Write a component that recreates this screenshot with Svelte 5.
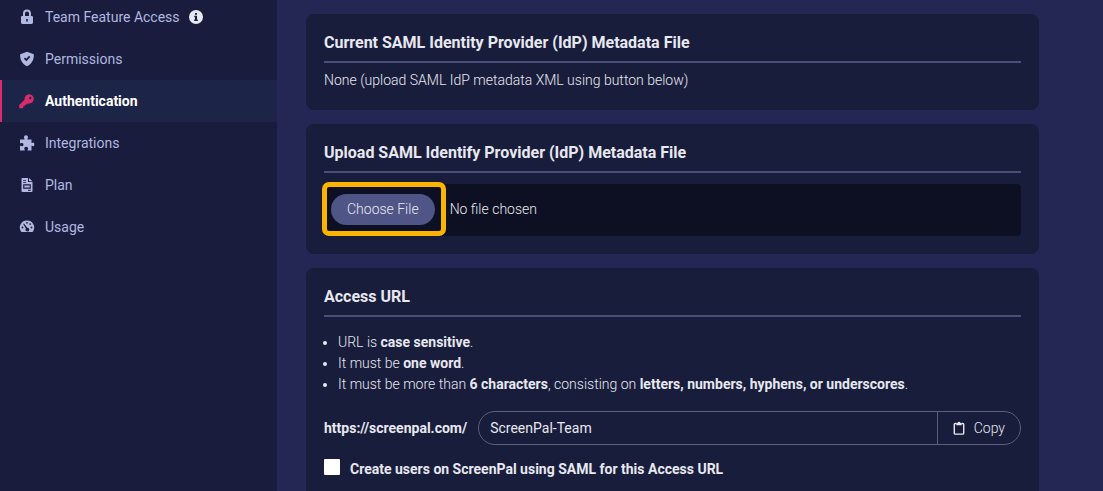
<script>
  const navItems = [
    { id: 'features', label: 'Team Feature Access', info: true },
    { id: 'permissions', label: 'Permissions' },
    { id: 'authentication', label: 'Authentication', active: true },
    { id: 'integrations', label: 'Integrations' },
    { id: 'plan', label: 'Plan' },
    { id: 'usage', label: 'Usage' }
  ];
  let slug = $state('ScreenPal-Team');
  let createUsers = $state(false);

  function copyUrl() {
    navigator.clipboard?.writeText('https://screenpal.com/' + slug);
  }
</script>

{#snippet icon(id)}
  <svg class="icon" viewBox="0 0 16 16" aria-hidden="true">
    {#if id === 'features'}
      <path fill-rule="evenodd" d="M4 7V4.600a4 4 0 0 1 8 0V7h.6c.9 0 1.400.6 1.400 1.400v5.200c0 .9-.6 1.400-1.400 1.400H3.400C2.500 15 2 14.500 2 13.600V8.400C2 7.500 2.500 7 3.400 7zm2 0h4V4.600a2 2 0 0 0-4 0zm1.200 3v2.500h1.600V10z" />
    {:else if id === 'permissions'}
      <path fill-rule="evenodd" d="M8 .8l6.800 2.500c.4 4.900-1.500 9.400-6.800 12C2.700 12.700.8 8.200 1.200 3.300zM4.900 7.700L7.300 10.200 11.300 6l-1.200-1.200-2.800 3-1.200-1.300z" />
    {:else if id === 'authentication'}
      <path fill-rule="evenodd" d="M10 1.200a4.700 4.700 0 1 1-1.300 9.200L7.400 11.700H5.800v1.500H4.300v1.400L3.400 15.200H.2v-3.300l5.400-5.200A4.700 4.700 0 0 1 10 1.200zM11.300 3.800a1.200 1.200 0 1 0 0 2.400 1.200 1.200 0 0 0 0-2.400z" />
    {:else if id === 'integrations'}
      <path d="M1 4.500h4.500c.4-.7-.5-1-.5-2.200C5 1.100 5.800.3 7 .3s2 .8 2 2c0 1.200-.9 1.500-.5 2.200h4v3.300c.6.500 1-.2 1.700-.2.800 0 1.100.8 1.100 1.800s-.4 1.800-1.100 1.800c-.7 0-1.100-.8-1.700-.3v4.600H8.700c-.5-.6.400-1 .4-2 0-1-.8-1.700-1.900-1.700s-1.900.7-1.900 1.700c0 1 .9 1.400.4 2H1V11c.5-.5 1 .3 2 .3 1 0 1.500-.6 1.500-1.700S3.800 7.900 2.800 7.900c-1 0-1.300.7-1.800.2z" />
    {:else if id === 'plan'}
      <path fill-rule="evenodd" d="M3.300 1H9v4h4.500v9.200c0 .5-.3.800-.8.800H3.300c-.5 0-.8-.3-.8-.8V1.800c0-.5.300-.8.800-.8zM4.200 2.900v.9H7v-.9zm0 2v.9H7v-.9zM4.200 7.300v4.400h7.600V7.300zm1.100 1.100h5.400v2.200H5.300zM9 12.800v.9h2.800v-.9z" />
      <path d="M10 1l3.500 3.200H10z" />
    {:else if id === 'usage'}
      <path fill-rule="evenodd" d="M8 1.600a7 7 0 0 1 6.200 10.600c-.2.500-.5.700-1 .7H2.800c-.5 0-.8-.2-1-.7A7 7 0 0 1 8 1.600zM8 2.900a.9.900 0 1 0 0 1.800.9.900 0 0 0 0-1.800zM3.500 7.600a.9.900 0 1 0 0 1.800.9.900 0 0 0 0-1.800zm9 0a.9.900 0 1 0 0 1.800.9.900 0 0 0 0-1.800zm-1.400-3.400a.9.900 0 1 0 0 1.800.9.900 0 0 0 0-1.800zM5 4.400l-.8.600 2.700 4.600a1.800 1.800 0 1 0 1.400-.8z" />
    {/if}
  </svg>
{/snippet}

<div class="page">
  <nav class="sidebar" aria-label="Team settings">
    {#each navItems as item (item.id)}
      <a class="nav-item" class:active={item.active} href="#{item.id}" aria-current={item.active ? 'page' : undefined}>
        {@render icon(item.id)}
        <span>{item.label}</span>
        {#if item.info}
          <svg class="info" viewBox="0 0 14 14" aria-hidden="true">
            <circle cx="7" cy="7" r="7" fill="#e8e8f0" />
            <path d="M6 3h2v1.800H6zM5.300 5.800H8v3.700h.8V11H5.200V9.500H6V7.200h-.7z" fill="#191c3c" />
          </svg>
        {/if}
      </a>
    {/each}
  </nav>

  <main class="content">
    <section class="card">
      <h2>Current SAML Identity Provider (IdP) Metadata File</h2>
      <p>None (upload SAML IdP metadata XML using button below)</p>
    </section>

    <section class="card">
      <h2 id="upload-title">Upload SAML Identify Provider (IdP) Metadata File</h2>
      <div class="upload">
        <input class="file" type="file" accept=".xml" aria-labelledby="upload-title" />
        <span class="highlight"></span>
      </div>
    </section>

    <section class="card">
      <h2>Access URL</h2>
      <ul>
        <li>URL is <strong>case sensitive</strong>.</li>
        <li>It must be <strong>one word</strong>.</li>
        <li>It must be more than <strong>6 characters</strong>, consisting on <strong>letters, numbers, hyphens, or underscores</strong>.</li>
      </ul>
      <div class="url-row">
        <label for="slug">https://screenpal.com/</label>
        <div class="url-group">
          <input id="slug" type="text" bind:value={slug} />
          <button type="button" onclick={copyUrl}>
            <svg class="clipboard" viewBox="0 0 12 14" aria-hidden="true">
              <path d="M3.500 2.500H2.200c-.5 0-.9.400-.9.900v8.800c0 .5.400.9.900.9h7.600c.5 0 .9-.4.9-.9V3.400c0-.5-.4-.9-.9-.9H8.500" fill="none" stroke="currentColor" stroke-width="1.400" />
              <path d="M3.300 4.300V1.900h1.200a1.600 1.600 0 0 1 3 0h1.200v2.400z" fill="currentColor" />
            </svg>
            Copy
          </button>
        </div>
      </div>
      <div class="check-row">
        <input id="create-users" type="checkbox" bind:checked={createUsers} />
        <label for="create-users">Create users on ScreenPal using SAML for this Access URL</label>
      </div>
    </section>
  </main>
</div>

<style>
  :global(body) {
    background: #242753;
    overflow: hidden;
  }
  .page {
    display: grid;
    grid-template-columns: 277px minmax(0, 1fr);
    min-height: 100vh;
    color: #e8e8f0;
    font: 300 14px/22px Roboto, sans-serif;
  }
  .page * {
    box-sizing: border-box;
  }
  .sidebar {
    background: #191c3c;
    margin-top: -4px;
  }
  .nav-item {
    display: flex;
    align-items: center;
    height: 42px;
    padding-left: 17px;
    border-left: 2px solid transparent;
    color: #b0b8e0;
    font-size: 14px;
    font-weight: 400;
    text-decoration: none;
  }
  .nav-item.active {
    background: #1c2448;
    border-color: #dc2a70;
    color: #fff;
    font-weight: 700;
  }
  .icon {
    width: 16px;
    height: 16px;
    margin-right: 10px;
    fill: #b0b8e0;
  }
  .active .icon {
    fill: #dc2a70;
  }
  .info {
    width: 14px;
    height: 14px;
    margin-left: 9px;
  }
  .content {
    display: flex;
    flex-direction: column;
    gap: 14px;
    padding: 14px 64px 0 29px;
  }
  .card {
    padding: 18px;
    border-radius: 8px;
    background: #191d3c;
  }
  h2 {
    margin: 0;
    padding: 1px 0 8px;
    border-bottom: 2px solid #4b4e78;
    font-size: 16px;
    line-height: 20px;
    font-weight: 700;
  }
  p {
    margin: 6px 0 1px;
  }
  .upload {
    position: relative;
    margin-top: 11px;
  }
  .file {
    display: block;
    width: 100%;
    height: 52px;
    padding: 10px 7px;
    border-radius: 4px;
    background: #0d1022;
    color: inherit;
    font: inherit;
    line-height: 31px;
  }
  .file::file-selector-button {
    height: 31px;
    margin: 0 15px 0 0;
    padding: 0 16px;
    border: 0;
    border-radius: 16px;
    background: #4f5586;
    color: #e8e8f0;
    font: inherit;
  }
  .highlight {
    position: absolute;
    left: -2px;
    top: -2px;
    width: 124px;
    height: 54px;
    border: 5px solid #fbb400;
    border-radius: 7px;
    box-sizing: border-box;
    pointer-events: none;
  }
  ul {
    margin: 15px 0 16px;
    padding-left: 14px;
    line-height: 21px;
  }
  strong {
    font-weight: 700;
  }
  .url-row {
    display: flex;
    align-items: center;
    gap: 11px;
  }
  label {
    font-weight: 700;
  }
  .url-group {
    display: flex;
    flex: 1;
    height: 34px;
    border: 1px solid #5c5f78;
    border-radius: 17px;
    overflow: hidden;
  }
  .url-group input {
    flex: 1;
    min-width: 0;
    padding: 0 11px;
    border: 0;
    background: transparent;
    color: inherit;
    font: inherit;
    font-weight: 400;
  }
  .url-group button {
    display: flex;
    align-items: center;
    gap: 9px;
    padding: 0 15px;
    border: 0;
    border-left: 1px solid #5c5f78;
    background: transparent;
    color: inherit;
    font: inherit;
  }
  .clipboard {
    width: 12px;
    height: 14px;
  }
  .check-row {
    display: flex;
    align-items: center;
    gap: 10px;
    margin-top: 13px;
  }
  .check-row input {
    appearance: none;
    width: 16px;
    height: 16px;
    margin: 0 0 4px;
    border-radius: 1px;
    background: #fff;
  }
  .check-row input:checked {
    background: #4f5586;
  }
</style>
